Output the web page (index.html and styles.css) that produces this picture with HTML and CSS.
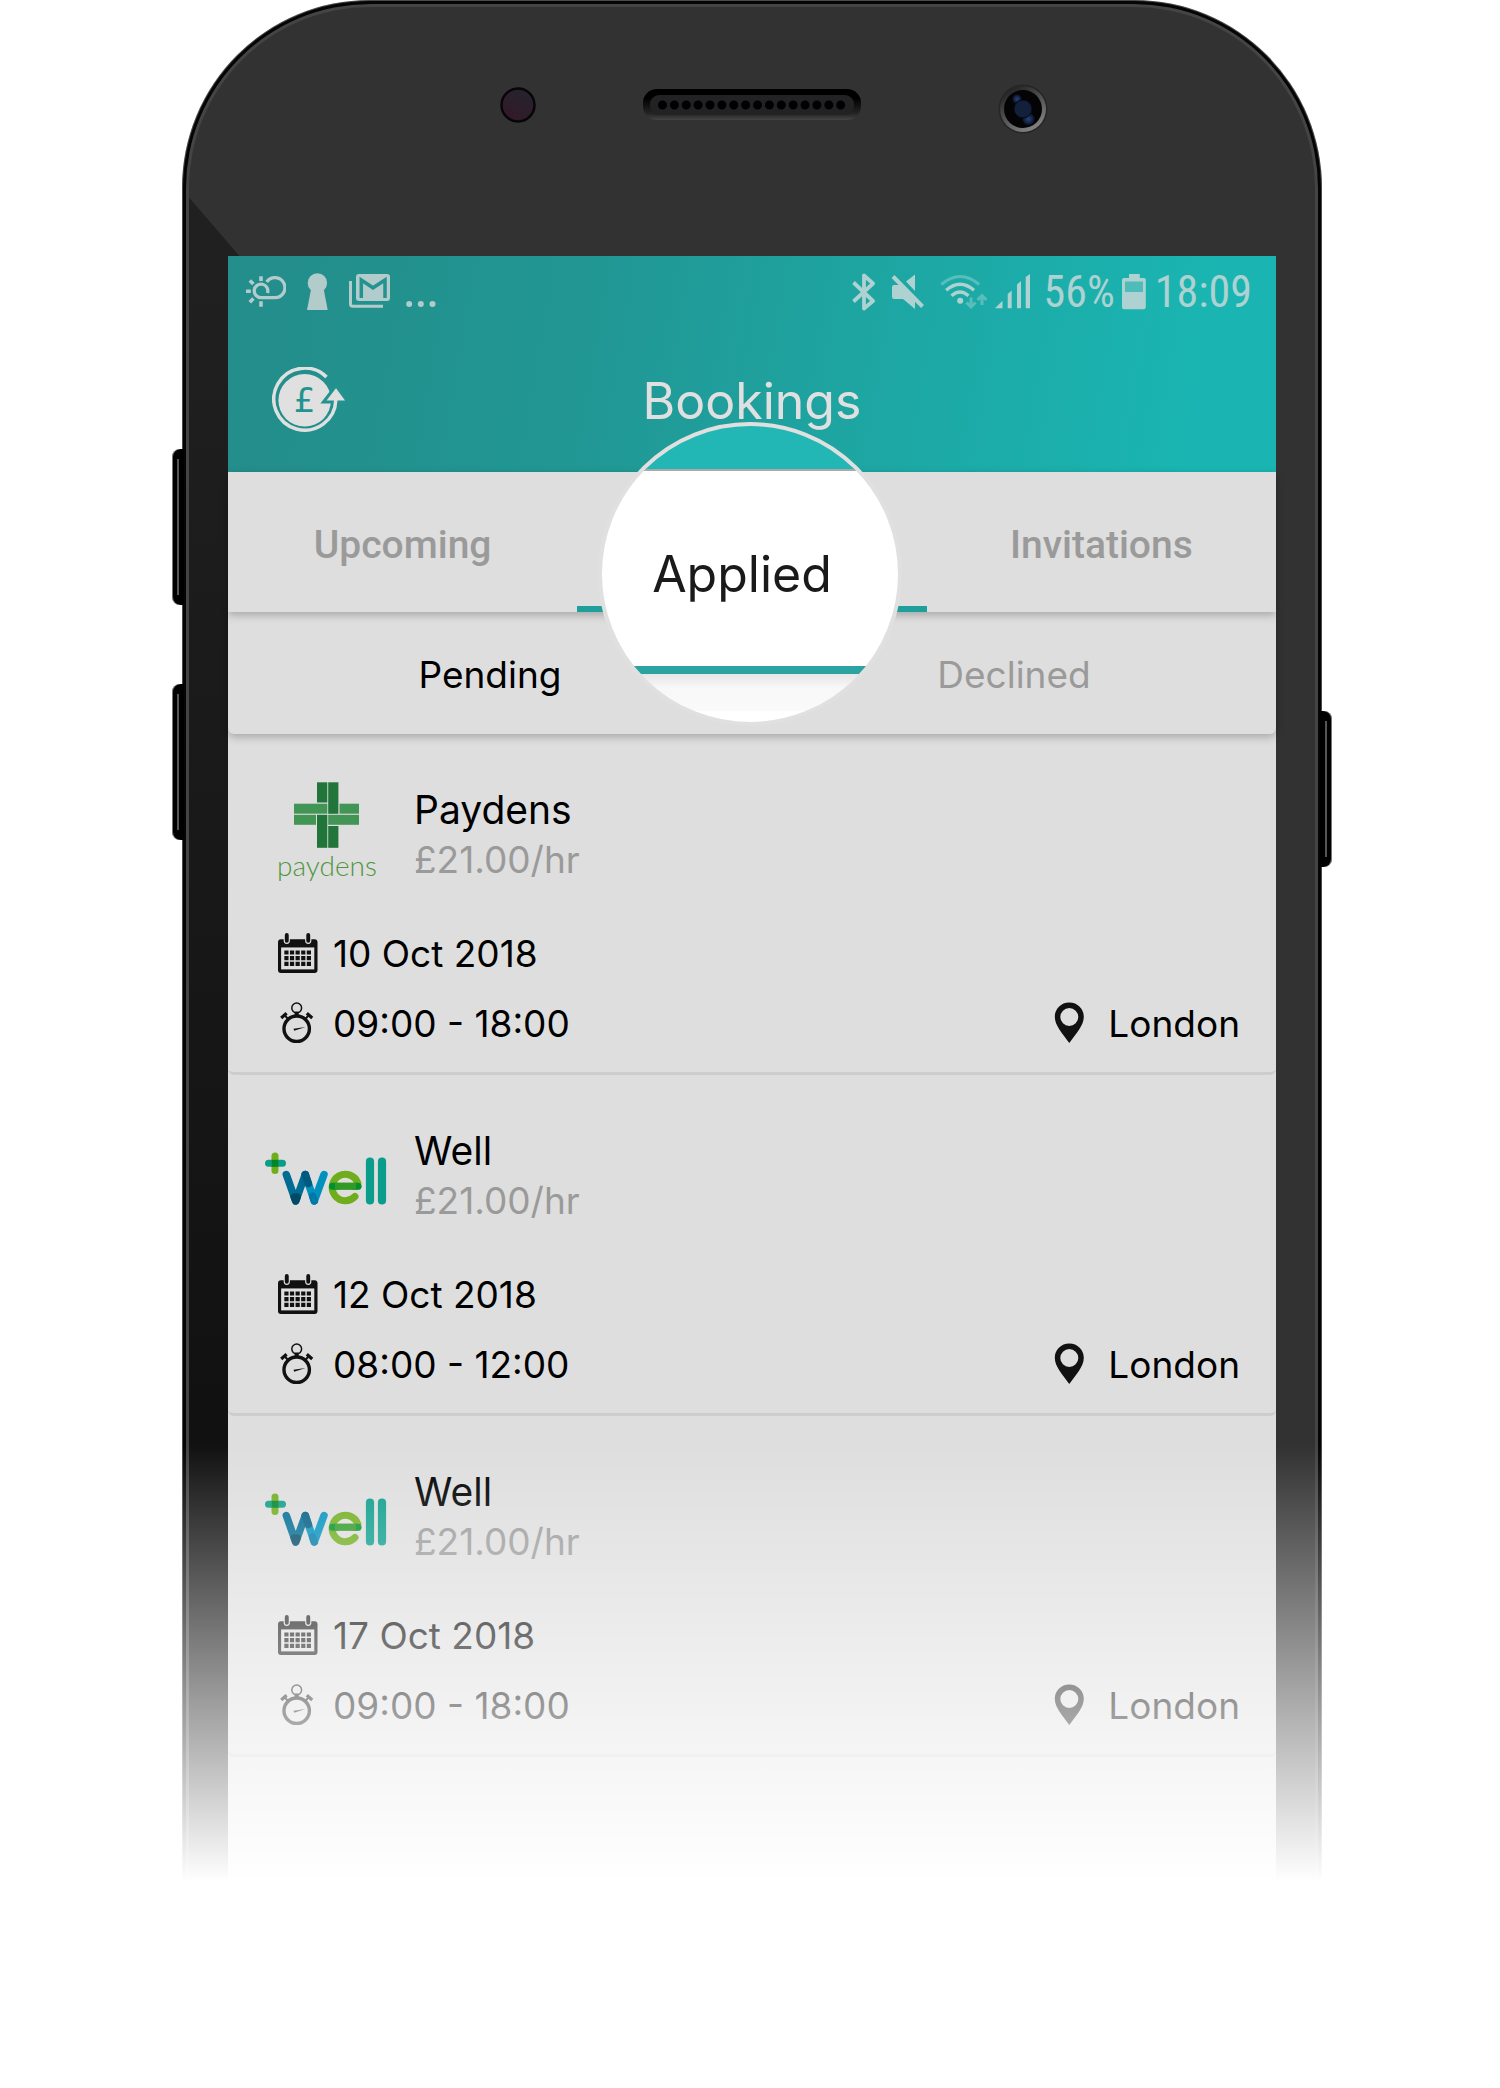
FILE: index.html
```html
<!DOCTYPE html>
<html lang="en">
<head>
<meta charset="utf-8">
<meta name="viewport" content="width=device-width, initial-scale=1">
<title>Bookings</title>
<link rel="stylesheet" href="styles.css">
</head>
<body>
<svg class="sprite" aria-hidden="true">
  <symbol id="calendar" viewBox="0 0 41 42">
    <rect x="0" y="7" width="40.5" height="34.5" rx="3" fill="#111"/>
    <rect x="3.2" y="15.3" width="34" height="22.5" fill="#dedede"/>
    <path d="M6.5 20.5h27.5M6.5 26.3h27.5M6.5 32.1h27.5" stroke="#111" stroke-width="4.2" stroke-dasharray="4.3 1.45"/>
    <path d="M9 2.5v6M31 2.5v6" stroke="#dedede" stroke-width="6.4" stroke-linecap="round"/>
    <path d="M9 2.5v6M31 2.5v6" stroke="#111" stroke-width="4" stroke-linecap="round"/>
  </symbol>
  <symbol id="stopwatch" viewBox="1 0 34 42">
    <g fill="none" stroke="#111">
      <circle cx="16.7" cy="26.7" r="12.7" stroke-width="3.4"/>
      <circle cx="16.7" cy="6" r="4.9" stroke-width="1.5"/>
      <path d="M16.7 9.5v4" stroke-width="4"/>
      <path d="M1.2 16l5.4-4.8M32.2 16l-5.4-4.8" stroke-width="3.2"/>
      <path d="M4.5 13l3.5 4M28.9 13l-3.5 4" stroke-width="2"/>
    </g>
    <path d="M13.5 26.8L25.5 25l-11.3 3.8z" fill="#111"/>
  </symbol>
  <symbol id="pin" viewBox="0 0 31 42">
    <path fill="#111" fill-rule="evenodd" d="M15.3.5C7 .5.8 6.8.8 14.7c0 8.800 7.500 16.300 14.500 26.300C22.300 31 29.800 23.500 29.800 14.700 29.800 6.800 23.600.5 15.300.5zM15.300 6a9 9 0 1 1 0 18 9 9 0 0 1 0-18z"/>
  </symbol>
  <symbol id="well" viewBox="0 0 140 110">
    <g fill="none" stroke-linecap="round" stroke-linejoin="round" stroke-width="7">
      <path d="M12.5 42.3h14" stroke="#0b9d8c"/>
      <path d="M19 35v14.500" stroke="#70ad1c"/>
      <path d="M15.5 42.3h7" stroke="#00852c" stroke-linecap="butt"/>
      <g stroke-width="7.5">
        <path d="M49.3 53.5L58.300 80L68 53.500" stroke="#0091bd"/>
        <path d="M30.3 53.5L39.700 80L49.300 53.500" stroke="#006b93"/>
        <path d="M38.200 76L39.700 80l1.500-4" stroke="#004a66"/>
        <path d="M49.300 53.500l3 9" stroke="#005a80"/>
        <path d="M58.300 80l-1.600-5" stroke="#0079a8"/>
      </g>
      <path d="M101.8 62A13.200 13.200 0 1 0 99 75.500" stroke="#70ad1c"/>
      <path d="M76.5 65.2H102" stroke="#70ad1c"/>
      <path d="M76.5 65.2h4M98.500 65.200H102" stroke="#00902f"/>
      <path d="M79 65.2h21" stroke="#2f9a26" stroke-linecap="butt"/>
      <path d="M114 40.5V79.500M126 40.500V79.500" stroke="#0b9d8c" stroke-width="8.200"/>
    </g>
  </symbol>
</svg>

<main class="stage">
  <div class="phone">
    <i class="key key-up"></i><i class="key key-down"></i><i class="key key-power"></i>
    <div class="top-bezel">
      <svg class="sensor" viewBox="0 0 36 36" width="36" height="36" aria-hidden="true">
        <defs><linearGradient id="sg" x1=".8" y1="0" x2=".2" y2="1"><stop offset=".2" stop-color="#27222c"/><stop offset="1" stop-color="#331828"/></linearGradient></defs>
        <circle cx="18" cy="18" r="16.5" fill="url(#sg)" stroke="#070507" stroke-width="2.4"/>
      </svg>
      <svg class="speaker" viewBox="0 0 220 32" width="220" height="32" aria-hidden="true">
        <defs><linearGradient id="pg" x1="0" y1="0" x2="0" y2="1"><stop offset=".3" stop-color="#000"/><stop offset=".8" stop-color="#252525"/><stop offset="1" stop-color="#454545"/></linearGradient></defs>
        <rect x="1" y="0" width="218" height="31" rx="14" fill="url(#pg)"/>
        <rect x="8" y="6" width="204" height="20" rx="9" fill="#222224"/>
        <path d="M20.5 16h180" stroke="#000" stroke-width="9" stroke-linecap="round" stroke-dasharray="0 11.88"/>
      </svg>
      <svg class="camera" viewBox="0 0 50 52" width="50" height="52" aria-hidden="true">
        <defs>
          <linearGradient id="cg" x1=".2" y1="0" x2=".8" y2="1"><stop offset="0" stop-color="#1d1d1d"/><stop offset="1" stop-color="#8a8a8a"/></linearGradient>
          <radialGradient id="lg"><stop offset="0" stop-color="#24447f"/><stop offset="1" stop-color="#0a1224"/></radialGradient>
        </defs>
        <circle cx="25" cy="26" r="24.5" fill="#262626"/>
        <circle cx="25" cy="26" r="23" fill="url(#cg)"/>
        <circle cx="25" cy="26" r="19" fill="#040406"/>
        <circle cx="19" cy="16" r="4.5" fill="url(#lg)"/>
        <circle cx="30.5" cy="36" r="6" fill="url(#lg)"/>
        <circle cx="25" cy="26" r="9" fill="#12203a" stroke="#060a14"/>
      </svg>
    </div>

    <div class="screen">
      <header class="app-header">
        <div class="status">
          <div class="status-left">
            <svg width="40" height="36" viewBox="0 0 40 36" fill="none" stroke="#b2cccc" stroke-width="3.3" aria-hidden="true">
              <path d="M20.7 8A10 10 0 1 1 29 23.700H15A6.800 6.800 0 1 1 21.500 19"/>
              <path d="M15 2.3V7M0 17.300h4.800M15 27.300v5.400M3.800 6.500l3.600 3.600M3.800 28.200l3.600-3.600" stroke-width="3.600"/>
            </svg>
            <svg width="21" height="38" viewBox="0 0 21 38" fill="#b2cccc" aria-hidden="true"><circle cx="10.4" cy="9.9" r="9.7"/><path d="M4.5 14h11.800L20.700 37H0z"/></svg>
            <svg width="42" height="36" viewBox="0 0 42 36" fill="none" aria-hidden="true">
              <path d="M1.5 7v23q0 2.300 2.300 2.300H34" stroke="#b2cccc" stroke-width="3"/>
              <rect x="7" y="0" width="34" height="27" rx="3" fill="#b2cccc"/>
              <path d="M12.3 24V6L24 13.800 36 6V24" stroke="#23938f" stroke-width="3.500"/>
            </svg>
            <svg class="more" width="30" height="8" viewBox="0 0 30 8" fill="#b2cccc" aria-hidden="true"><circle cx="3.2" cy="4" r="3"/><circle cx="14.8" cy="4" r="3"/><circle cx="26.5" cy="4" r="3"/></svg>
          </div>
          <div class="status-right">
            <svg width="24" height="38" viewBox="0 0 24 38" fill="none" stroke="#add2d1" stroke-width="3.8" stroke-linejoin="round" aria-hidden="true"><path d="M1.5 9.500L21 28 12 35.500v-33L21 10.500 1.500 28.500"/></svg>
            <svg class="mute" width="34" height="38" viewBox="0 -1 34 38" fill="#add2d1" aria-hidden="true"><path d="M24 .5V17L15 7.500zM3 11h6l15 15v9L12 25H3q-2 0-2-2V13q0-2 2-2z"/><path d="M2 2.500l29.500 30" stroke="#add2d1" stroke-width="4"/></svg>
            <svg width="48" height="38" viewBox="0 0 48 38" fill="none" aria-hidden="true">
              <g stroke="#add2d1" stroke-width="3.4"><path d="M11.5 22.800q8.500-7.500 17 0M6.200 17.300q13.900-12 27.800 0"/></g>
              <circle cx="20.2" cy="27.8" r="3" fill="#add2d1"/>
              <g stroke="#58bebb" stroke-width="3"><path d="M1.2 11.500q19-16 38 0M31 24.500v9M26.500 29.500l4.500 4.500 4.500-4.500M42 32v-9M37.500 27l4.500-4.500 4.500 4.500"/></g>
            </svg>
            <svg width="36" height="38" viewBox="0 -1 36 38" fill="#add2d1" aria-hidden="true"><path d="M0 34.300l7.500-7.500v7.500zM12.700 34.300V20l4-3.500v17.800zM22 34.300V10.500L26 7v27.300zM30.700 34.300V3L35 0v34.300z"/></svg>
            <span class="status-text battery-text">56%</span>
            <svg width="24" height="38" viewBox="0 -1 24 38" aria-hidden="true"><path fill="#add2d1" d="M7 0h10.800v4H22q1.800 0 1.800 1.800V33q0 2.200-2 2.200H2Q0 35.200 0 33V5.800Q0 4 2 4h5z"/><path fill="#4fbcb9" d="M3 7.500h18V18H3z"/></svg>
            <span class="status-text clock">18:09</span>
          </div>
        </div>
        <div class="title-bar">
          <button class="refund" type="button" aria-label="Payments">
            <svg width="74" height="66" viewBox="0 0 74 66" aria-hidden="true">
              <circle cx="32.7" cy="33.3" r="26.3" fill="#e0e0e0"/>
              <path d="M64 21.300L73 33.500H54.500z" fill="none" stroke="#23938f" stroke-width="6"/>
              <path d="M54.5 10A31 31 0 1 0 63.800 33" fill="none" stroke="#e0e0e0" stroke-width="3.500"/>
              <path d="M64 21.300L73 33.500H54.500z" fill="#e0e0e0"/>
              <text class="pound" x="32.5" y="45" text-anchor="middle">£</text>
            </svg>
          </button>
          <h1>Bookings</h1>
        </div>
      </header>

      <nav class="tabs">
        <button type="button" class="tab">Upcoming</button>
        <button type="button" class="tab tab-active"><span class="lens"><span class="lens-label">Applied</span></span></button>
        <button type="button" class="tab">Invitations</button>
      </nav>
      <nav class="subtabs">
        <button type="button" class="subtab subtab-active">Pending</button>
        <button type="button" class="subtab">Declined</button>
      </nav>

      <section class="list">
        <article class="card">
          <div class="card-head">
            <svg class="logo" viewBox="0 0 140 110" role="img" aria-label="Paydens">
              <g fill="#21753a">
                <rect x="61" y="2.3" width="10.3" height="20.2"/><rect x="72.2" y="2.3" width="10.2" height="31.5"/>
                <rect x="61" y="34.8" width="10.3" height="33"/><rect x="72.2" y="46" width="10.2" height="21.8"/>
              </g>
              <g fill="#439556">
                <rect x="38" y="23.7" width="33.3" height="10"/><rect x="83.5" y="23.7" width="19.5" height="10"/>
                <rect x="38" y="34.8" width="22" height="10"/><rect x="72.2" y="34.8" width="30.8" height="10"/>
              </g>
              <text class="wordmark" x="71" y="96" text-anchor="middle">paydens</text>
            </svg>
            <div class="who"><h2>Paydens</h2><p>£21.00/hr</p></div>
          </div>
          <div class="row"><svg class="icon"><use href="#calendar"/></svg><span>10 Oct 2018</span></div>
          <div class="row"><svg class="icon"><use href="#stopwatch"/></svg><span>09:00 - 18:00</span><svg class="pin"><use href="#pin"/></svg><span>London</span></div>
        </article>
        <article class="card">
          <div class="card-head">
            <svg class="logo" role="img" aria-label="Well"><use href="#well"/></svg>
            <div class="who"><h2>Well</h2><p>£21.00/hr</p></div>
          </div>
          <div class="row"><svg class="icon"><use href="#calendar"/></svg><span>12 Oct 2018</span></div>
          <div class="row"><svg class="icon"><use href="#stopwatch"/></svg><span>08:00 - 12:00</span><svg class="pin"><use href="#pin"/></svg><span>London</span></div>
        </article>
        <article class="card">
          <div class="card-head">
            <svg class="logo" role="img" aria-label="Well"><use href="#well"/></svg>
            <div class="who"><h2>Well</h2><p>£21.00/hr</p></div>
          </div>
          <div class="row"><svg class="icon"><use href="#calendar"/></svg><span>17 Oct 2018</span></div>
          <div class="row"><svg class="icon"><use href="#stopwatch"/></svg><span>09:00 - 18:00</span><svg class="pin"><use href="#pin"/></svg><span>London</span></div>
        </article>
      </section>
    </div>
  </div>
</main>
</body>
</html>
```
FILE: styles.css
```css
* { box-sizing: border-box; }

body {
  margin: 0;
  min-height: 100vh;
  background: #fff;
  font-family: Inter, "Liberation Sans", sans-serif;
  color: #000;
}

h1, h2, p { margin: 0; font-weight: 400; }

button {
  border: 0;
  padding: 0;
  background: none;
  font: inherit;
  color: inherit;
}

svg { display: block; flex: none; }
.sprite { position: absolute; width: 0; height: 0; }

.stage { padding-left: 4px; }

/* Handset */
.phone {
  position: relative;
  width: min(100%, 1140px);
  margin: 0 auto;
  padding: 0 46px;
  border-radius: 188px 188px 0 0;
  background:
    linear-gradient(#202020, #111 1180px) 0 256px / 46px 100% no-repeat,
    linear-gradient(to top right, #202020 50%, transparent 51%) 7px 198px / 50px 58px no-repeat,
    #323232;
  box-shadow: inset 0 0 0 1px #4a4a4a, inset 0 0 0 4px #050505, inset 0 0 0 7px #444;
}

/* Fades the lower part of the handset into the page */
.phone::after {
  content: "";
  position: absolute;
  inset: auto 0 0 0;
  height: 437px;
  background: linear-gradient(rgba(255, 255, 255, 0), #fff);
}

.key {
  position: absolute;
  width: 12px;
  height: 156px;
  background: linear-gradient(#555, #555) 5px 50% / 2px 136px no-repeat, #000;
}
.key-up, .key-down { left: -10px; border-radius: 8px 0 0 8px; box-shadow: inset 1px 0 #777; }
.key-up { top: 449px; }
.key-down { top: 684px; }
.key-power { right: -10px; top: 711px; border-radius: 0 8px 8px 0; box-shadow: inset -1px 0 #777; }

.top-bezel {
  display: grid;
  grid-template-columns: 1fr auto 1fr;
  height: 256px;
  padding-top: 83px;
  align-items: start;
}
.sensor { justify-self: end; margin: 4px 106px 0 0; }
.speaker { margin-top: 6px; }
.camera { margin-left: 136px; }

.screen { padding-bottom: 125px; background: #dedede; }

/* Header */
.app-header {
  height: 216px;
  background: linear-gradient(100deg, #238e8b 5%, #219794 35%, #1da8a5 65%, #1ab5b2 92%);
  color: #e0e0e0;
}
.status {
  display: flex;
  justify-content: space-between;
  align-items: center;
  height: 72px;
  padding: 0 24px 0 18px;
}
.status-left, .status-right { display: flex; align-items: center; }
.status-left { gap: 21px; }
.more { margin: 24px 0 0 -6px; }
.status-right { gap: 7px; }
.mute { margin: 0 8px; }
.status-text {
  font: 44px/48px "Roboto Condensed", "Liberation Sans Narrow", Roboto, sans-serif;
  color: #add2d1;
}
.battery-text { margin-left: 6px; }
.clock { margin-left: 2px; }

.title-bar {
  display: grid;
  grid-template-columns: 74px 1fr 74px;
  align-items: center;
  height: 144px;
  padding: 0 44px;
}
.title-bar h1 { padding-top: 2px; font-size: 50px; line-height: 58px; text-align: center; }
.pound { font: 34px "DejaVu Sans", sans-serif; fill: #23938f; }

/* Tabs */
.tabs {
  position: relative;
  z-index: 1;
  display: grid;
  grid-template-columns: repeat(3, 1fr);
  height: 140px;
  background: #dedede;
  box-shadow: 0 3px 8px rgba(0, 0, 0, .25);
}
.tab {
  padding-top: 6px;
  font: 500 39px/48px Roboto, sans-serif;
  color: #9a9a9a;
}
.tab-active { position: relative; border-bottom: 6px solid #1f9f9c; }

.lens {
  position: absolute;
  top: -50px;
  left: calc(50% - 154px);
  display: flex;
  align-items: center;
  justify-content: center;
  width: 304px;
  height: 304px;
  border: 4px solid #e0e0e0;
  border-radius: 50%;
  background: linear-gradient(
    #22b7b4 43px, #a9a9a9 43px 45px,
    #fff 45px 240px,
    #2ba3a0 240px 248px,
    #e6e6e6 248px, #f8f8f8 262px, #fafafa 285px,
    #fff 285px);
}
.lens-label {
  padding-right: 16px;
  font: 50px/58px Inter, sans-serif;
  color: #1a1a1a;
}

.subtabs {
  display: grid;
  grid-template-columns: 1fr 1fr;
  height: 122px;
  border-radius: 0 0 6px 6px;
  background: #dedede;
  box-shadow: 0 3px 8px rgba(0, 0, 0, .25);
}
.subtab { padding-top: 2px; font-size: 37px; color: #9a9a9a; }
.subtab-active { color: #000; }

/* Booking cards */
.card {
  padding: 46px 36px 14px 28px;
  border-bottom: 3px solid #cdcdcd;
  border-radius: 6px;
}
.card-head { display: flex; gap: 18px; margin-bottom: 28px; }
.logo { width: 140px; height: 110px; }
.who { padding-top: 5px; }
.who h2 { font-size: 39px; line-height: 50px; }
.who p { font-size: 37px; line-height: 50px; color: #9a9a9a; }
.wordmark { font: 300 28px Lato, sans-serif; fill: #4f9640; }

.row {
  display: flex;
  align-items: center;
  gap: 15px;
  height: 70px;
  padding-left: 22px;
  font-size: 37px;
}
.icon { width: 40px; height: 42px; }
.pin { width: 31px; height: 42px; margin: 0 8px 0 auto; }
```
